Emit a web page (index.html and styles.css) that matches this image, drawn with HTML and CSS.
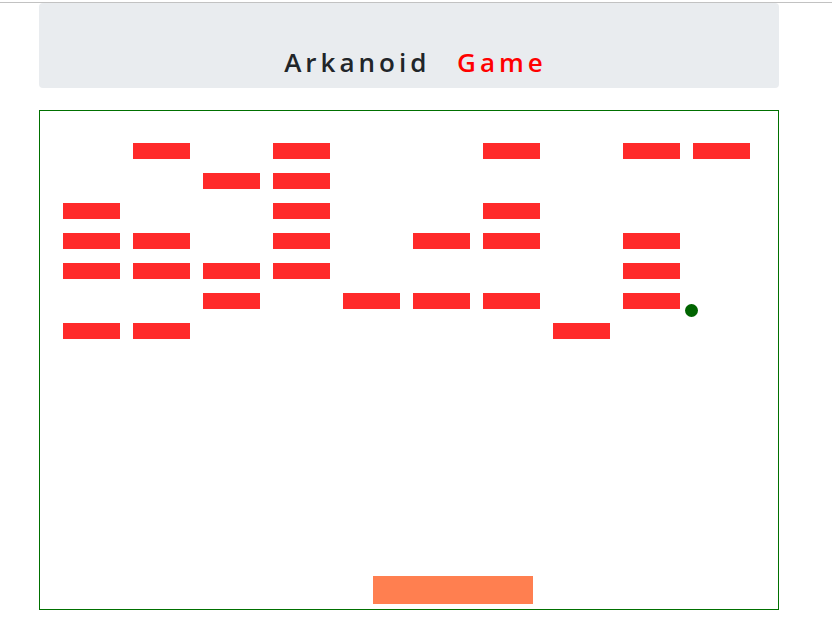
FILE: index.html
```html
<!DOCTYPE html>
<html>
<head>
<meta charset="utf-8">
<title>Arkanoid Game</title>
<link rel="stylesheet" href="styles.css">
</head>
<body>
<div class="topline"></div>
<div class="page">
  <header class="jumbotron">
    <h1 class="title">Arkanoid <span class="red">Game</span></h1>
  </header>
  <main class="board">
    <div class="bricks">
      <i></i><b></b><i></i><b></b><i></i><i></i><b></b><i></i><b></b><b></b>
      <i></i><i></i><b></b><b></b><i></i><i></i><i></i><i></i><i></i><i></i>
      <b></b><i></i><i></i><b></b><i></i><i></i><b></b><i></i><i></i><i></i>
      <b></b><b></b><i></i><b></b><i></i><b></b><b></b><i></i><b></b><i></i>
      <b></b><b></b><b></b><b></b><i></i><i></i><i></i><i></i><b></b><i></i>
      <i></i><i></i><b></b><i></i><b></b><b></b><b></b><i></i><b></b><i></i>
      <b></b><b></b><i></i><i></i><i></i><i></i><i></i><b></b><i></i><i></i>
    </div>
    <div class="ball"></div>
    <div class="paddle"></div>
  </main>
</div>
</body>
</html>
```

FILE: styles.css
```css
html, body {
  margin: 0;
  padding: 0;
  background: #ffffff;
}
.topline {
  margin-top: 2px;
  height: 1px;
  background: #c2c2c2;
}
.page {
  width: 740px;
  margin-left: 39px;
}
.jumbotron {
  box-sizing: border-box;
  height: 85px;
  background: #e9ecef;
  border-radius: 4px;
  display: flex;
  align-items: flex-end;
  justify-content: center;
  padding-bottom: 10px;
}
.title {
  margin: 0;
  font-family: "Open Sans", "Noto Sans", sans-serif;
  font-weight: 600;
  font-size: 26px;
  line-height: 31px;
  letter-spacing: 4px;
  color: #212529;
  padding-left: 13px;
}
.red {
  color: #ff0000;
  margin-left: 16px;
}
.board {
  position: relative;
  box-sizing: border-box;
  margin-top: 22px;
  width: 740px;
  height: 500px;
  border: 1px solid #007000;
}
.bricks {
  display: grid;
  grid-template-columns: repeat(10, 57px);
  grid-auto-rows: 16px;
  column-gap: 13px;
  row-gap: 14px;
  padding: 32px 0 0 23px;
}
.bricks b {
  display: block;
  background: #ff2a2a;
}
.bricks i {
  display: block;
}
.ball {
  position: absolute;
  left: 645px;
  top: 193px;
  width: 13px;
  height: 13px;
  border-radius: 50%;
  background: #006400;
}
.paddle {
  position: absolute;
  left: 333px;
  top: 465px;
  width: 160px;
  height: 28px;
  background: #ff7f50;
}
```
